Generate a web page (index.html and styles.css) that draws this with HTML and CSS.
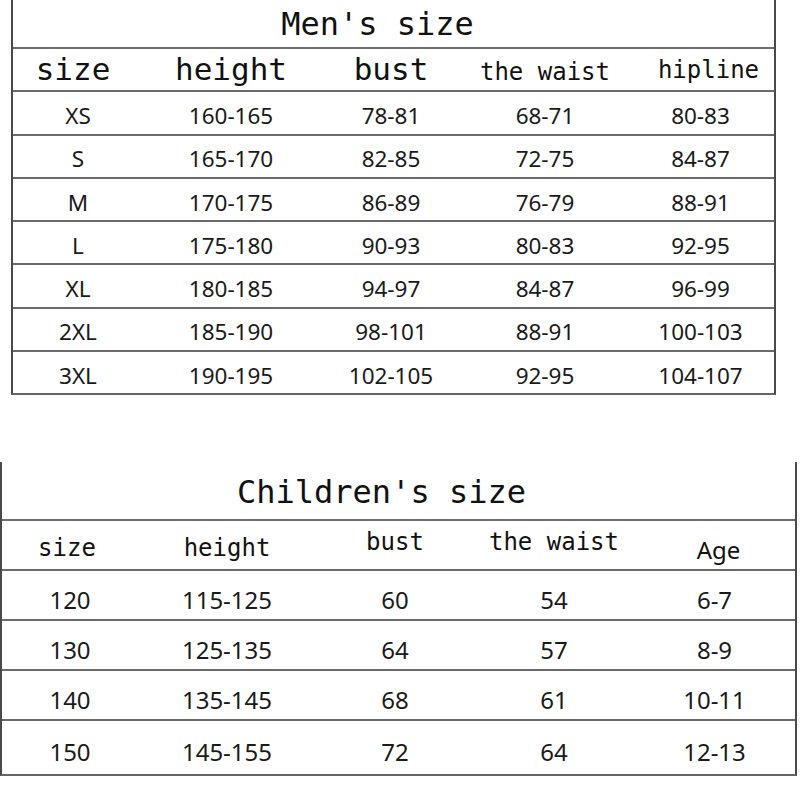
FILE: index.html
```html
<!DOCTYPE html>
<html>
<head>
<meta charset="utf-8">
<link rel="stylesheet" href="styles.css">
</head>
<body>
<div class="chart men">
  <div class="title">Men's size</div>
  <div class="row head">
    <div class="big shift-l">size</div>
    <div class="big">height</div>
    <div class="big">bust</div>
    <div class="mid lower">the waist</div>
    <div class="mid shift-r">hipline</div>
  </div>
  <div class="row data"><div>XS</div><div>160-165</div><div>78-81</div><div>68-71</div><div>80-83</div></div>
  <div class="row data"><div>S</div><div>165-170</div><div>82-85</div><div>72-75</div><div>84-87</div></div>
  <div class="row data"><div>M</div><div>170-175</div><div>86-89</div><div>76-79</div><div>88-91</div></div>
  <div class="row data"><div>L</div><div>175-180</div><div>90-93</div><div>80-83</div><div>92-95</div></div>
  <div class="row data"><div>XL</div><div>180-185</div><div>94-97</div><div>84-87</div><div>96-99</div></div>
  <div class="row data"><div>2XL</div><div>185-190</div><div>98-101</div><div>88-91</div><div>100-103</div></div>
  <div class="row data last"><div>3XL</div><div>190-195</div><div>102-105</div><div>92-95</div><div>104-107</div></div>
</div>

<div class="chart kids">
  <div class="title">Children's size</div>
  <div class="row head">
    <div class="mid low">size</div>
    <div class="mid low">height</div>
    <div class="mid">bust</div>
    <div class="mid">the waist</div>
    <div class="sans low age">Age</div>
  </div>
  <div class="row data"><div>120</div><div>115-125</div><div>60</div><div>54</div><div>6-7</div></div>
  <div class="row data"><div>130</div><div>125-135</div><div>64</div><div>57</div><div>8-9</div></div>
  <div class="row data"><div>140</div><div>135-145</div><div>68</div><div>61</div><div>10-11</div></div>
  <div class="row data last"><div>150</div><div>145-155</div><div>72</div><div>64</div><div>12-13</div></div>
</div>
</body>
</html>
```

FILE: styles.css
```css
html, body {
  margin: 0;
  padding: 0;
  background: #ffffff;
}

body {
  width: 800px;
  color: #111;
  font-family: "DejaVu Sans Mono", "Liberation Mono", monospace;
}

.chart {
  box-sizing: border-box;
  border-left: 2px solid #4a4a4a;
  border-right: 2px solid #4a4a4a;
  border-bottom: 2px solid #666;
}

.title {
  display: flex;
  align-items: center;
  justify-content: center;
  font-size: 32px;
  border-bottom: 2px solid #707070;
}

.row {
  display: grid;
  border-bottom: 2px solid #6a6a6a;
}

.row.last {
  border-bottom: none;
}

.row > div {
  display: flex;
  align-items: center;
  justify-content: center;
  white-space: nowrap;
}

.big {
  font-size: 31px;
}

.mid {
  font-size: 24px;
}

.sans {
  font-family: "Noto Sans", "Open Sans", sans-serif;
  font-size: 24px;
}

.data > div {
  font-family: "Noto Sans", "Open Sans", sans-serif;
  color: #1a1a1a;
}

/* Men's chart */
.men {
  margin-left: 11px;
  width: 765px;
}

.men .title {
  height: 49px;
  padding-right: 32px;
  padding-top: 1px;
  box-sizing: border-box;
}

.men .row {
  grid-template-columns: 130px 176px 144px 164px 147px;
  height: 41.3px;
}

.men .head > div {
  padding-bottom: 2px;
}

.men .head > div.lower {
  padding-bottom: 0;
  padding-top: 5px;
}

.men .head .shift-l {
  padding-right: 10px;
}

.men .head .shift-r {
  padding-left: 16px;
  padding-bottom: 0;
  padding-top: 1px;
}

.men .data > div {
  font-size: 22.5px;
  padding-top: 5px;
}

/* Children's chart */
.kids {
  margin-top: 67px;
  margin-left: 0;
  width: 797px;
}

.kids .title {
  height: 59px;
  padding-right: 34px;
  padding-top: 2px;
  box-sizing: border-box;
}

.kids .row {
  grid-template-columns: 136px 178px 158px 160px 161px;
  height: 48px;
}

.kids .row.last {
  height: 53px;
}

.kids .head > div {
  padding-bottom: 6px;
}

.kids .head > div.low {
  padding-bottom: 0;
  padding-top: 6px;
}

.kids .head > div:first-child {
  padding-right: 6px;
}

.kids .head > div.age {
  padding-left: 8px;
  padding-top: 9px;
}

.kids .data > div {
  font-size: 24px;
  padding-top: 8px;
}
```
